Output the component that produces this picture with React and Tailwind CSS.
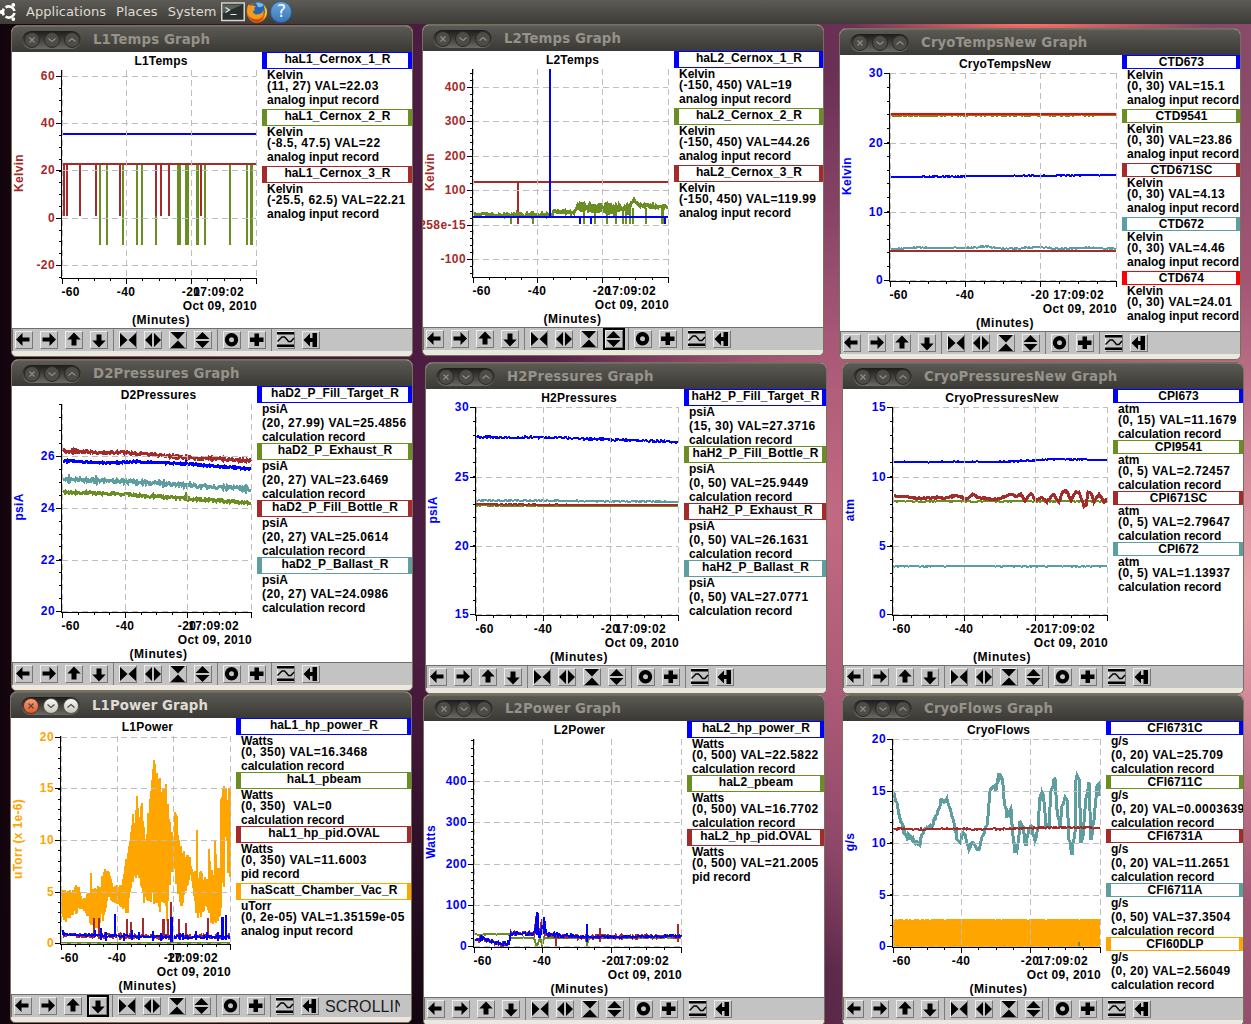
import { Fragment } from 'react';
import clsx from 'clsx';

const BLUE = '#0000ff';
const GREEN = '#6b8e23';
const BROWN = '#a52a2a';
const CADET = '#5f9ea0';
const ORANGE = '#ffa500';
const RED = '#ff0000';

// small seeded generator so the traces are the same on every render
const random = (seed) => {
  let s = seed * 7919 + 17;
  return () => {
    s = (s * 1103515245 + 12345) % 2147483648;
    return s / 2147483648;
  };
};

const lerp = (points, x, k = 1) => {
  let i = 1;
  while (i < points.length - 1 && points[i][0] < x) i++;
  const a = points[i - 1];
  const b = points[i];
  const t = Math.min(1, Math.max(0, (x - a[0]) / (b[0] - a[0] || 1)));
  return a[k] + (b[k] - a[k]) * t;
};

// line trace with measurement noise
const tracePath = ({ points, amp = 0, step = 1 }, seed) => {
  const rnd = random(seed);
  const end = points[points.length - 1][0];
  let d = '';
  for (let x = points[0][0]; x <= end; x += step) {
    const y = lerp(points, x) + (rnd() - 0.5) * 2 * amp;
    d += `${d ? 'L' : 'M'}${x} ${y.toFixed(1)}`;
  }
  return d;
};

// band trace: [x, top, bottom]
const bandPath = (points, seed) => {
  const rnd = random(seed);
  let d = '';
  for (let x = points[0][0]; x <= points[points.length - 1][0]; x++) {
    const top = lerp(points, x, 1);
    const bottom = lerp(points, x, 2);
    const span = bottom - top;
    const y1 = top + rnd() * rnd() * span * 0.3;
    const y2 = bottom - rnd() * rnd() * span * 0.4;
    d += `M${x} ${y1.toFixed(0)}V${y2.toFixed(0)}`;
  }
  return d;
};

const flat = (y, end, y2 = y) => [[50, y], [end, y2]];

const windows = [
  {
    name: 'L1Temps', x: 11, y: 25, axis: 'Kelvin', color: BROWN, legendX: 250, top: 18,
    xs: [50, 114, 179, 244], ys: [[24, '60'], [71, '40'], [118, '20'], [166, '0'], [213, '-20']], sub: 4,
    traces: [
      { c: BLUE, points: flat(82, 244) },
      { c: GREEN, spikes: [[88], [95], [111], [125], [130], [144], [167, 4], [175, 4], [185.5, 3], [193], [218], [235], [239.5, 3]].map(([x, w]) => [x, 112, 193, w]) },
      { c: BROWN, spikes: [52, 55, 68, 84, 108, 144, 149, 157, 189].map((x) => [x, 112, 164]) },
      { c: BROWN, points: flat(112, 244) },
    ],
    legend: [
      [BLUE, 'haL1_Cernox_1_R', 'Kelvin', '(11, 27) VAL=22.03', 'analog input record'],
      [GREEN, 'haL1_Cernox_2_R', 'Kelvin', '(-8.5, 47.5) VAL=22', 'analog input record'],
      [BROWN, 'haL1_Cernox_3_R', 'Kelvin', '(-25.5, 62.5) VAL=22.21', 'analog input record'],
    ],
  },
  {
    name: 'L2Temps', x: 422, y: 24, axis: 'Kelvin', color: BROWN, legendX: 251, top: 18, active: 7,
    xs: [50, 114, 179, 245], ys: [[36, '400'], [70, '300'], [105, '200'], [139, '100'], [174, '258e-15'], [208, '-100']], sub: 5,
    traces: [
      { c: BROWN, points: flat(131, 245) },
      { c: BROWN, spikes: [[95, 131, 173]] },
      { c: GREEN, points: [[51, 164], [61, 163], [72, 164], [129, 164], [131, 161], [152, 161], [155, 155], [165, 156], [206, 157], [208, 151], [211, 149], [218, 155], [245, 156]], amp: 1.6, thick: true },
      { c: GREEN, points: [[154, 155], [165, 157], [206, 158]], amp: 5.5, thick: true },
      { c: GREEN, spikes: [[88], [110], [161], [172], [184], [193], [200], [203], [207], [210], [223], [239, 3]].map(([x, w]) => [x, 157 + (x < 150 ? 8 : 0), 173, w]) },
      { c: BLUE, points: flat(166, 245) },
      { c: BLUE, spikes: [[127, 18, 166], [157, 166, 173], [168, 166, 173], [242, 166, 173]] },
    ],
    legend: [
      [BLUE, 'haL2_Cernox_1_R', 'Kelvin', '(-150, 450) VAL=19', 'analog input record'],
      [GREEN, 'haL2_Cernox_2_R', 'Kelvin', '(-150, 450) VAL=44.26', 'analog input record'],
      [BROWN, 'haL2_Cernox_3_R', 'Kelvin', '(-150, 450) VAL=119.99', 'analog input record'],
    ],
  },
  {
    name: 'CryoTempsNew', x: 839, y: 28, axis: 'Kelvin', color: BLUE, legendX: 282, top: 18,
    xs: [50, 125, 200, 276], ys: [[18, '30'], [88, '20'], [157, '10'], [225, '0']], sub: 5,
    traces: [
      { c: GREEN, points: flat(60.5, 276, 60), amp: 0.8 },
      { c: RED, points: flat(59, 276), amp: 0.3 },
      { c: BLUE, points: flat(122, 276, 120), amp: 0.5 },
      { c: BROWN, points: flat(196, 276) },
      { c: CADET, points: [[51, 194], [75, 192.5], [90, 193], [125, 193], [145, 191.5], [165, 194], [198, 192], [220, 194], [250, 192.5], [276, 194]], amp: 0.6 },
    ],
    legend: [
      [BLUE, 'CTD673', 'Kelvin', '(0, 30) VAL=15.1', 'analog input record'],
      [GREEN, 'CTD9541', 'Kelvin', '(0, 30) VAL=23.86', 'analog input record'],
      [BROWN, 'CTD671SC', 'Kelvin', '(0, 30) VAL=4.13', 'analog input record'],
      [CADET, 'CTD672', 'Kelvin', '(0, 30) VAL=4.46', 'analog input record'],
      [RED, 'CTD674', 'Kelvin', '(0, 30) VAL=24.01', 'analog input record'],
    ],
  },
  {
    name: 'D2Pressures', x: 11, y: 359, axis: 'psiA', color: BLUE, legendX: 245, top: 18,
    xs: [50, 113, 175, 239], ys: [[70, '26'], [122, '24'], [174, '22'], [225, '20']], sub: 4,
    traces: [
      { c: BROWN, points: [[51, 65], [113, 67], [145, 69], [175, 71.5], [205, 72.5], [239, 75]], amp: 1.3, thick: true },
      { c: BLUE, points: [[51, 75], [100, 77], [125, 75.5], [175, 78], [239, 83]], amp: 0.8, thick: true },
      { c: BLUE, spikes: [[174, 74, 78]] },
      { c: CADET, points: [[51, 93], [113, 95.5], [175, 99], [239, 103]], amp: 1.8, thick: true },
      { c: GREEN, points: [[51, 106], [113, 108.5], [175, 112.5], [239, 117]], amp: 1.2, thick: true },
      { c: GREEN, spikes: [[174, 106, 112]] },
    ],
    legend: [
      [BLUE, 'haD2_P_Fill_Target_R', 'psiA', '(20, 27.99) VAL=25.4856', 'calculation record'],
      [GREEN, 'haD2_P_Exhaust_R', 'psiA', '(20, 27) VAL=23.6469', 'calculation record'],
      [BROWN, 'haD2_P_Fill_Bottle_R', 'psiA', '(20, 27) VAL=25.0614', 'calculation record'],
      [CADET, 'haD2_P_Ballast_R', 'psiA', '(20, 27) VAL=24.0986', 'calculation record'],
    ],
  },
  {
    name: 'H2Pressures', x: 425, y: 362, axis: 'psiA', color: BLUE, legendX: 258, top: 18,
    xs: [50, 117, 184, 252], ys: [[18, '30'], [88, '25'], [157, '20'], [225, '15']], sub: 5,
    traces: [
      { c: BLUE, points: [[51, 48], [117, 48.5], [184, 50.5], [252, 53]], amp: 1 },
      { c: GREEN, points: flat(116.5, 252, 117), amp: 0.3 },
      { c: BROWN, points: flat(115.3, 252, 116.2), amp: 0.3 },
      { c: CADET, points: flat(111.3, 252, 112.7), amp: 0.6 },
    ],
    legend: [
      [BLUE, 'haH2_P_Fill_Target_R', 'psiA', '(15, 30) VAL=27.3716', 'calculation record'],
      [GREEN, 'haH2_P_Fill_Bottle_R', 'psiA', '(0, 50) VAL=25.9449', 'calculation record'],
      [BROWN, 'haH2_P_Exhaust_R', 'psiA', '(0, 50) VAL=26.1631', 'calculation record'],
      [CADET, 'haH2_P_Ballast_R', 'psiA', '(0, 50) VAL=27.0771', 'calculation record'],
    ],
  },
  {
    name: 'CryoPressuresNew', x: 842, y: 362, axis: 'atm', color: BLUE, legendX: 270, top: 18,
    xs: [50, 121, 192, 264], ys: [[18, '15'], [88, '10'], [157, '5'], [225, '0']], sub: 5,
    traces: [
      { c: BLUE, points: [[51, 73], [155, 73], [187, 71.5], [217, 70], [264, 71]], amp: 0.6 },
      { c: GREEN, points: flat(112.3, 264), amp: 0.6 },
      { c: BROWN, thick: true, amp: 0.7, points: [[51, 107], [62, 107.5], [77, 109.3], [94, 108.7], [104, 108.7], [114, 106.3], [124, 110], [130, 105.3], [135, 108.7], [154, 110.7], [167, 105.3], [174, 107.7], [178, 105.3], [182, 112], [188, 104.7], [193, 112], [199, 107.7], [204, 112.7], [210, 104.7], [216, 112.7], [220, 102.5], [224, 102.5], [228, 112], [232, 103.3], [236, 103.3], [238, 109.3], [241, 117], [243, 117], [245, 103.3], [248, 104.3], [251, 112.7], [256, 105.3], [261, 112.7], [264, 109.3]] },
      { c: CADET, points: flat(177.3, 264), amp: 0.4 },
    ],
    legend: [
      [BLUE, 'CPI673', 'atm', '(0, 15) VAL=11.1679', 'calculation record'],
      [GREEN, 'CPI9541', 'atm', '(0, 5) VAL=2.72457', 'calculation record'],
      [BROWN, 'CPI671SC', 'atm', '(0, 5) VAL=2.79647', 'calculation record'],
      [CADET, 'CPI672', 'atm', '(0, 5) VAL=1.13937', 'calculation record'],
    ],
  },
  {
    name: 'L1Power', x: 10, y: 691, axis: 'uTorr (x 1e-6)', color: ORANGE, legendX: 225, top: 18, active: 3, focused: true,
    xs: [50, 106, 162, 219], ys: [[19, '20'], [70, '15'], [122, '10'], [174, '5'], [225, '0']], sub: 5,
    traces: [
      { c: ORANGE, band: [[51, 172, 200], [56, 170, 207], [61, 173, 197], [67, 164, 197], [71, 182, 190], [77, 175, 200], [79, 174, 206], [80, 155, 207], [81, 172, 209], [84, 170, 210], [89, 162, 209], [92, 152, 204], [97, 150, 180], [102, 167, 184], [111, 167, 190], [114, 140, 196], [117, 134, 196], [119, 110, 176], [121, 90, 167], [124, 104, 160], [126, 78, 160], [128, 96, 166], [131, 82, 170], [134, 117, 192], [137, 94, 190], [140, 67, 189], [143, 40, 187], [146, 50, 189], [148, 72, 194], [149, 60, 194], [151, 74, 186], [154, 62, 185], [156, 68, 205], [158, 90, 185], [160, 108, 154], [163, 118, 160], [164, 92, 160], [166, 88, 175], [168, 122, 185], [171, 130, 190], [179, 139, 160], [182, 154, 170], [185, 152, 197], [186, 112, 199], [187, 150, 200], [191, 154, 199], [195, 160, 190], [197, 156, 198], [198, 130, 200], [200, 152, 206], [203, 150, 207], [204, 116, 207], [206, 150, 203], [209, 150, 203], [210, 80, 190], [211, 76, 167], [213, 65, 172], [214, 70, 140], [215, 70, 104], [217, 70, 155], [219, 70, 160]] },
      { c: GREEN, points: flat(225, 219) },
      { c: BROWN, points: [[51, 217], [100, 218], [162, 219], [219, 218]], amp: 2 },
      { c: BROWN, spikes: [[83, 200, 218], [88, 200, 218], [116, 201, 218], [120, 204, 218], [132, 200, 218], [152, 201, 218, 3], [157, 201, 218], [160, 184, 218], [168, 201, 218], [175, 205, 218], [197, 200, 218]] },
      { c: BLUE, points: [[51, 216], [75, 217], [100, 218], [162, 219], [219, 219]], amp: 1 },
      { c: BLUE, spikes: [[52, 212, 217], [84, 212, 219], [90, 210, 222], [95, 214, 223], [104, 196, 218], [113, 215, 223], [121, 212, 222], [128, 214, 222], [142, 213, 223], [150, 215, 223], [160, 199, 224, 3], [169, 215, 222], [172, 215, 222], [185, 213, 222], [196, 214, 222], [207, 214, 223], [211, 199, 222, 3], [215, 197, 222]] },
    ],
    legend: [
      [BLUE, 'haL1_hp_power_R', 'Watts', '(0, 350) VAL=16.3468', 'calculation record'],
      [GREEN, 'haL1_pbeam', 'Watts', '(0, 350)  VAL=0', 'calculation record'],
      [BROWN, 'haL1_hp_pid.OVAL', 'Watts', '(0, 350) VAL=11.6003', 'pid record'],
      [ORANGE, 'haScatt_Chamber_Vac_R', 'uTorr', '(0, 2e-05) VAL=1.35159e-05', 'analog input record'],
    ],
  },
  {
    name: 'L2Power', x: 423, y: 694, axis: 'Watts', color: BLUE, legendX: 263, top: 18,
    xs: [50, 118, 187, 257], ys: [[60, '400'], [101, '300'], [143, '200'], [184, '100'], [225, '0']], sub: 5,
    traces: [
      { c: GREEN, amp: 0.5, points: [[51, 213.5], [85, 213], [86, 216.7], [110, 217], [112, 224.5], [114, 223], [116, 217], [118, 224], [120, 217], [162, 217], [163, 224], [165, 217], [257, 216.7]] },
      { c: BROWN, amp: 1.8, points: [[51, 218], [66, 220], [75, 223], [85, 223.5], [87, 212], [111, 213], [112, 196], [115, 215], [118, 198], [121, 214], [150, 216], [257, 215.5]] },
      { c: BROWN, spikes: [[132, 214, 225], [176, 207, 221], [254, 203, 221]] },
      { c: BLUE, amp: 1.8, points: [[51, 219], [59, 217], [66, 220], [75, 222.5], [85, 222.5], [87, 212.5], [111, 213], [113, 191.7], [115, 216], [117, 213], [120, 196.7], [122, 213], [151, 215.7]] },
      { c: BLUE, amp: 1, points: [[151, 215.7], [200, 216], [257, 215]] },
      { c: BLUE, spikes: [[113, 192, 214, 3], [120, 197, 213], [163, 203, 221]] },
    ],
    legend: [
      [BLUE, 'haL2_hp_power_R', 'Watts', '(0, 500) VAL=22.5822', 'calculation record'],
      [GREEN, 'haL2_pbeam', 'Watts', '(0, 500) VAL=16.7702', 'calculation record'],
      [BROWN, 'haL2_hp_pid.OVAL', 'Watts', '(0, 500) VAL=21.2005', 'pid record'],
    ],
  },
  {
    name: 'CryoFlows', x: 842, y: 694, axis: 'g/s', color: BLUE, legendX: 263, top: 18,
    xs: [50, 118, 187, 257], ys: [[18, '20'], [70, '15'], [122, '10'], [174, '5'], [225, '0']], sub: 5,
    traces: [
      { c: CADET, amp: 2.6, thick: true, points: [[50, 72], [54, 81], [57, 97], [60, 107], [63, 116], [67, 114], [73, 122], [77, 122], [80, 111], [84, 104], [89, 104], [94, 92], [98, 81], [102, 79], [105, 81], [109, 97], [113, 111], [114, 121], [117, 121], [120, 111], [123, 117], [126, 127], [130, 122], [134, 131], [137, 126], [140, 114], [144, 104], [147, 71], [150, 66], [153, 67], [156, 54], [159, 56], [161, 77], [164, 94], [168, 89], [169, 104], [172, 131], [175, 124], [177, 102], [180, 106], [183, 126], [185, 111], [188, 102], [192, 121], [195, 107], [197, 77], [200, 71], [203, 104], [206, 107], [208, 71], [212, 57], [214, 87], [217, 107], [219, 87], [222, 74], [224, 81], [226, 117], [229, 132], [232, 111], [233, 57], [236, 57], [238, 121], [240, 117], [243, 77], [246, 61], [248, 119], [251, 97], [254, 64], [256, 61], [257, 74]] },
      { c: BROWN, points: [[50, 108], [160, 108], [200, 106.7], [257, 106.7]], amp: 0.8 },
      { c: ORANGE, spikes: [[153.5, 199, 225.5, 207]] },
      { c: ORANGE, points: flat(199.5, 257, 199), amp: 0.5 },
      { c: GREEN, spikes: [[54, 224, 226, 1], [111, 224, 226, 1], [161, 224, 226, 1], [236, 221, 225]] },
    ],
    legend: [
      [BLUE, 'CFI6731C', 'g/s', '(0, 20) VAL=25.709', 'calculation record'],
      [GREEN, 'CFI6711C', 'g/s', '(0, 20) VAL=0.00036394', 'calculation record'],
      [BROWN, 'CFI6731A', 'g/s', '(0, 20) VAL=11.2651', 'calculation record'],
      [CADET, 'CFI6711A', 'g/s', '(0, 50) VAL=37.3504', 'calculation record'],
      [ORANGE, 'CFI60DLP', 'g/s', '(0, 20) VAL=2.56049', 'calculation record'],
    ],
  },
];

function Chart({ win }) {
  const { xs, ys, sub, top, color, traces, legendX } = win;
  const end = xs[3];
  const mid = (50 + end) / 2 + 2;

  const xMinor = [];
  for (let i = 0; i < 3; i++) {
    for (let j = 1; j < 4; j++) xMinor.push(Math.round(xs[i] + ((xs[i + 1] - xs[i]) * j) / 4));
  }
  const yMinor = [];
  const stepY = (ys[ys.length - 1][0] - ys[0][0]) / (ys.length - 1) / sub;
  for (let y = ys[0][0]; y > top; y -= stepY) yMinor.push(Math.round(y));
  for (let y = ys[0][0]; y < 226; y += stepY) yMinor.push(Math.round(y));

  return (
    <svg
      width={legendX}
      height="276"
      viewBox={`0 0 ${legendX} 276`}
      className="block shrink-0 overflow-hidden text-[12px] font-bold"
    >
      <g shapeRendering="crispEdges" fill="none">
        {traces.map((t, i) => (
          <Fragment key={i}>
            {t.points && <path d={tracePath(t, i + 3)} stroke={t.c} strokeWidth={t.thick ? 3 : 2} />}
            {t.band && <path d={bandPath(t.band, 5)} stroke={t.c} strokeWidth="2" />}
            {t.spikes && t.spikes.map(([x, y1, y2, w = 2], k) => (
              <path key={k} d={`M${x} ${y1}V${y2}`} stroke={t.c} strokeWidth={w} />
            ))}
          </Fragment>
        ))}
        <g stroke="#bebebe" strokeDasharray="6 4">
          {xs.map((x) => <path key={x} d={`M${x + 0.5} ${top}V226`} />)}
          {ys.map(([y]) => <path key={y} d={`M50 ${y + 0.5}H${end}`} />)}
        </g>
        <g stroke="#000">
          <path d={`M49.5 ${top}V227M50 226.5H${end + 1}`} />
          {xs.map((x) => <path key={x} d={`M${x + 0.5} 226V232`} />)}
          {xMinor.map((x) => <path key={x} d={`M${x + 0.5} 226V229`} />)}
          {ys.map(([y]) => <path key={y} d={`M44 ${y + 0.5}H50`} />)}
          {yMinor.map((y, i) => <path key={i} d={`M47 ${y + 0.5}H50`} />)}
        </g>
      </g>
      <text x={mid} y="13" textAnchor="middle" letterSpacing="0.2">{win.name}</text>
      <g fill={color} textAnchor="end" letterSpacing="0.4">
        {ys.map(([y, label]) => <text key={y} x="43" y={y + 4}>{label}</text>)}
      </g>
      <text transform="translate(11 121) rotate(-90)" textAnchor="middle" fill={color} letterSpacing="0.3">
        {win.axis}
      </text>
      <g letterSpacing="0.35">
        <text x="49.5" y="244">-60</text>
        <text x={xs[1]} y="244" textAnchor="middle">-40</text>
        <text x={xs[2]} y="244" textAnchor="middle">-20</text>
        <text x={end - 12} y="244" textAnchor="end">17:09:02</text>
        <text x={end + 1} y="258" textAnchor="end">Oct 09, 2010</text>
        <text x={mid} y="272" textAnchor="middle" letterSpacing="0.5">(Minutes)</text>
      </g>
    </svg>
  );
}

function LegendEntry({ entry }) {
  const [color, name, unit, value, record] = entry;
  const tall = name.includes('_');
  return (
    <div className="leading-[11px] whitespace-pre">
      <div
        className={clsx(
          'flex justify-center border-y border-r-4 border-l-[5px] leading-[12px] tracking-[0.1px]',
          tall ? 'h-[17px]' : 'h-[14px]'
        )}
        style={{ borderColor: color }}
      >
        {name}
      </div>
      <div className={clsx('pt-px pl-[5px]', /[pg]/.test(unit) ? 'h-[15px]' : 'h-3')}>{unit}</div>
      <div className="h-3.5 pl-[5px] tracking-[0.42px]">{value}</div>
      <div className={clsx('pl-[5px]', /[pg]/.test(record) ? 'h-3.5' : 'h-[11px]')}>{record}</div>
    </div>
  );
}

const icons = [
  <path d="M1 8.5 7.5 2v4.5h7v4h-7V15z" />,
  <path d="M16 8.5 9.5 2v4.5h-7v4h7V15z" />,
  <path d="M9 1.500 15.700 8.500H11.500v6h-5v-6H2.300z" />,
  <path d="M9 16.500 15.700 9.500H11.500v-6h-5v6H2.300z" />,
  <path d="M1 2v14l7.500-7zM17 2v14L9.500 9z" />,
  <path d="M8 2v14L1 9zM10 2v14l7-7z" />,
  <path d="M1.500 1h14.500L9 8.500zM1.500 17h14.500L9 9.500z" />,
  <path d="M1.500 8h14L8.500 1zM1.500 10h14l-7 7z" />,
  <circle cx="8.500" cy="8.700" r="4.600" fill="none" stroke="#000" strokeWidth="4.200" />,
  <path d="M6.500 2.500h4.500v4h4.500v4.500H11v4H6.500v-4H2V6.500h4.500z" />,
  <g>
    <path d="M0 1h17v2.500H0zM0 13.500h17V16H0z" />
    <path d="M.5 10.500 3 8l2-2h2.500l2 2 2 2.500h2.500l3-3.500" fill="none" stroke="#000" strokeWidth="1.400" />
  </g>,
  <path d="M1.500 9 8 2.500v4.500h2.500V2H15v14h-4.500v-5H8v4.500z" />,
];

const groups = [[0, 1, 2, 3], [4, 5, 6, 7], [8, 9], [10, 11]];

function Toolbar({ active, status }) {
  return (
    <div className="flex h-[23px] shrink-0 items-center border-t border-l border-[#6f6f6f] bg-[#c3c3c3] pl-[2px]">
      {groups.map((group, i) => (
        <Fragment key={i}>
          {i > 0 && <div className="mx-[5px] h-full w-px bg-[#7c7c7c]"></div>}
          <div className="flex gap-[7px]">
            {group.map((n) => (
              <button
                key={n}
                className={clsx(
                  'h-[18px] w-[18px] border border-t-[#eeeeee] border-l-[#eeeeee] border-r-[#777777] border-b-[#777777]',
                  active === n && 'ring-2 ring-black'
                )}
              >
                <svg viewBox="0 0 18 18" className="-m-px block h-[18px] w-[18px]">{icons[n]}</svg>
              </button>
            ))}
          </div>
        </Fragment>
      ))}
      {status && (
        <div className="ml-[6px] w-[75px] overflow-hidden text-[16px] leading-[21px] tracking-[0.1px] whitespace-nowrap text-[#1c1c1c]">
          {status}
        </div>
      )}
    </div>
  );
}

function TitleButton({ glyph, focused, close }) {
  return (
    <span
      className={clsx(
        'flex h-4 w-4 items-center justify-center rounded-full border',
        !focused && 'border-[#2c2b28] bg-[#4d4c47]',
        focused && close && 'border-[#6b3018] bg-linear-to-b from-[#f79d78] to-[#df5b28]',
        focused && !close && 'border-[#55534c] bg-linear-to-b from-[#f8f7f4] to-[#c9c5bb]'
      )}
    >
      <svg
        viewBox="0 0 8 8"
        className="h-2 w-2"
        fill="none"
        stroke={focused ? '#4b4943' : '#908d85'}
        strokeWidth="1.2"
      >
        <path d={glyph} />
      </svg>
    </span>
  );
}

function GraphWindow({ win }) {
  return (
    <div
      className="absolute flex h-[332px] w-[402px] flex-col overflow-hidden rounded-t-[7px] rounded-b-[5px] border border-[#77705a] bg-[#ece8e0]"
      style={{ left: win.x, top: win.y }}
    >
      <div className="flex h-[26px] shrink-0 items-center border-t border-[#6c6a62] bg-linear-to-b from-[#5a5953] to-[#3a3935] pl-[10px]">
        <div className="flex h-[18px] w-[59px] items-center gap-1 rounded-full bg-linear-to-b from-[#1d1c1a] to-[#6b6a64] pl-[1.5px]">
          <TitleButton close focused={win.focused} glyph="M1.500 1.500 6.500 6.500M6.500 1.500 1.500 6.500" />
          <TitleButton focused={win.focused} glyph="M.5 2.500 4 5.500 7.500 2.500" />
          <TitleButton focused={win.focused} glyph="M.5 5.500 4 2.500 7.500 5.500" />
        </div>
        <h2
          className={clsx(
            "pl-[12px] font-['DejaVu_Sans'] text-[13.3px] leading-[20px] font-bold tracking-[0.12px]",
            win.focused ? 'text-[#dfdbd2]' : 'text-[#969289]'
          )}
        >
          {win.name} Graph
        </h2>
      </div>
      <div className="flex h-[276px] shrink-0 overflow-hidden bg-white">
        <Chart win={win} />
        <div className="min-w-0 grow overflow-hidden text-[12px] font-bold">
          {win.legend.map((entry) => <LegendEntry key={entry[1]} entry={entry} />)}
        </div>
      </div>
      <Toolbar active={win.active} status={win.focused && 'SCROLLING'} />
    </div>
  );
}

function TopPanel() {
  return (
    <div className="flex h-6 items-center bg-linear-to-b from-[#5c5b55] to-[#3d3c38] pb-px font-['DejaVu_Sans'] text-[13px] text-[#dfdbd2]">
      <svg viewBox="0 0 18 20" className="h-5 w-[18px]" fill="none" stroke="#fff">
        <path d="M5.500 5.300A6 6 0 0 1 14.500 9M14.500 11A6 6 0 0 1 5.500 14.700M3.800 13.200A6 6 0 0 1 3.800 6.800" strokeWidth="2.600" />
        <g fill="#fff" stroke="none">
          <circle cx="1.300" cy="10" r="1.900" />
          <circle cx="13.300" cy="2.900" r="1.900" />
          <circle cx="13.300" cy="17.100" r="1.900" />
        </g>
      </svg>
      <span className="ml-2 tracking-[0.05px]">Applications</span>
      <span className="ml-[10px] tracking-[0.05px]">Places</span>
      <span className="ml-[10px] tracking-[0.05px]">System</span>
      <svg viewBox="0 0 24 20" className="ml-[5px] h-5 w-6">
        <rect x="0.750" y="1" width="22.500" height="17.500" fill="#2a302e" stroke="#d5d5cf" strokeWidth="1.500" />
        <path d="M2 2.500h20L2 11z" fill="#59605d" />
        <path d="M4.500 5.500 8.500 8 4.500 10.500M9.500 12.500h6" fill="none" stroke="#e8e8e8" strokeWidth="1.200" />
      </svg>
      <svg viewBox="0 0 22 22" className="ml-px h-[22px] w-[22px]">
        <circle cx="11" cy="11.500" r="10.300" fill="#e66b12" />
        <circle cx="12" cy="8.500" r="7.600" fill="#2765b0" />
        <path d="M10 2c3-1 6 0 8 2-2 1-3 3-6 2z" fill="#78b8ea" />
        <path d="M1 9C1 6 2 4 3 3c0 1 1 2 2 2 2-1 4 0 5 1-2 0-2 2-1 3l-2 1c0 3 3 4 6 3 2 0 4-2 4-4 2 4-1 9-7 9C4 18 1 14 1 9z" fill="#f49b1c" />
        <path d="M18 4c4 4 4 11-1 15 3-5 2-9 1-15z" fill="#fbc62c" />
        <path d="M3 15c4 5 11 5 14 1-2 6-11 7-14-1z" fill="#c73c10" />
      </svg>
      <span className="ml-[2px] flex h-[22px] w-[22px] items-center justify-center rounded-full border border-[#2d619c] bg-linear-to-b from-[#6ba7dc] to-[#3877b9] text-[17px] leading-none text-white">
        ?
      </span>
    </div>
  );
}

export default function App() {
  return (
    <div className="relative h-[1024px] w-[1251px] overflow-hidden bg-[radial-gradient(180px_14px_at_1030px_24px,#ff7468_0%,#ff746800_100%),radial-gradient(600px_520px_at_1260px_590px,#eea5ac_0%,#d98a9ccc_30%,#b8607c88_60%,#b8607c00_100%),radial-gradient(300px_450px_at_832px_520px,#c87088_0%,#c8708800_100%),radial-gradient(500px_420px_at_420px_1080px,#0a0208_0%,#0a020800_100%),linear-gradient(90deg,#12040d_0%,#35102c_12%,#4c1c42_34%,#6a2f55_66%,#8a4a6a_100%)] font-['Liberation_Sans',sans-serif] text-black">
      <TopPanel />
      {windows.map((win) => <GraphWindow key={win.name} win={win} />)}
    </div>
  );
}
